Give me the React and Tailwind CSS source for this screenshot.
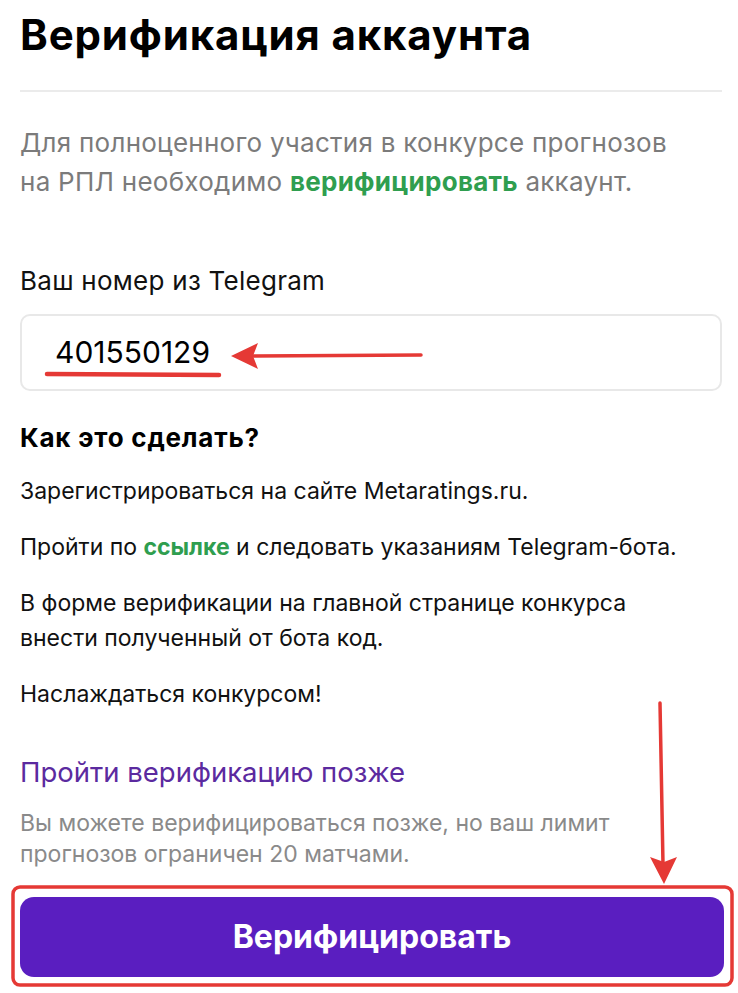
import React from "react";

const Annotations = () => (
  <svg
    className="pointer-events-none absolute left-0 top-0"
    width="738"
    height="993"
    viewBox="0 0 738 993"
  >
    {/* underline under the number */}
    <path d="M47 374 L219 375" stroke="#e53935" strokeWidth="4.5" strokeLinecap="round" fill="none" />
    {/* arrow to the number */}
    <path d="M421 355 L252 356" stroke="#e53935" strokeWidth="3.5" strokeLinecap="round" fill="none" />
    <path d="M231 356 L258 343 L253 356 L258 369 Z" fill="#e53935" />
    {/* arrow down to the button */}
    <path d="M660 703 L663 864" stroke="#e53935" strokeWidth="3.5" strokeLinecap="round" fill="none" />
    <path d="M664 884 L650 857 L664 862 L677 857 Z" fill="#e53935" />
    {/* box round the button */}
    <rect x="13" y="887" width="719" height="98" rx="7" stroke="#e53935" strokeWidth="3.5" fill="none" />
  </svg>
);

export default function App() {
  return (
    <div
      className="relative h-[993px] w-[738px] overflow-hidden bg-white text-[#111]"
      style={{ fontFamily: "Inter, 'Liberation Sans', sans-serif" }}
    >
      <div className="flex flex-col pl-5 pr-4">
        <h1 className="pt-[11px] text-[42px] font-bold leading-[48px] tracking-[0.02em] text-black">
          Верификация аккаунта
        </h1>
        <div className="mt-[31px] h-[2px] bg-[#ebebeb]" />

        <p className="mt-[31px] text-[26px] leading-[39px] tracking-[0.01em] text-[#7b7b7b]">
          Для полноценного участия в конкурсе прогнозов
          <br />
          на РПЛ необходимо{" "}
          <span className="font-bold text-[#2f9e4f]">верифицировать</span> аккаунт.
        </p>

        <label className="mt-[65px] text-[26px] leading-[30px] tracking-[0.01em] text-[#111]">
          Ваш номер из Telegram
        </label>

        <div className="mt-[18px] flex h-[77px] items-center rounded-[10px] border-2 border-[#e8e8e8] px-[33px]">
          <span className="text-[30px] text-black">401550129</span>
        </div>

        <h2 className="mt-[32px] text-[26px] font-bold leading-[30px] tracking-[0.03em] text-black">
          Как это сделать?
        </h2>

        <div className="mt-[21px] flex flex-col gap-[21px] text-[23px] leading-[35px] text-[#111]">
          <p>Зарегистрироваться на сайте Metaratings.ru.</p>
          <p>
            Пройти по <span className="font-bold text-[#2f9e4f]">ссылке</span> и следовать указаниям
            Telegram-бота.
          </p>
          <p>
            В форме верификации на главной странице конкурса
            <br />
            внести полученный от бота код.
          </p>
          <p>Наслаждаться конкурсом!</p>
        </div>

        <a className="mt-[44px] text-[27.5px] leading-[32px] text-[#5b2a9f]">
          Пройти верификацию позже
        </a>

        <p className="mt-[20px] text-[23px] leading-[31px] text-[#8a8a8a]">
          Вы можете верифицироваться позже, но ваш лимит
          <br />
          прогнозов ограничен 20 матчами.
        </p>

        <button className="mt-[27px] -mr-0.5 flex h-[80px] items-center justify-center rounded-[14px] bg-[#5a1ec0] text-[32px] font-bold text-white">
          Верифицировать
        </button>
      </div>
      <Annotations />
    </div>
  );
}
